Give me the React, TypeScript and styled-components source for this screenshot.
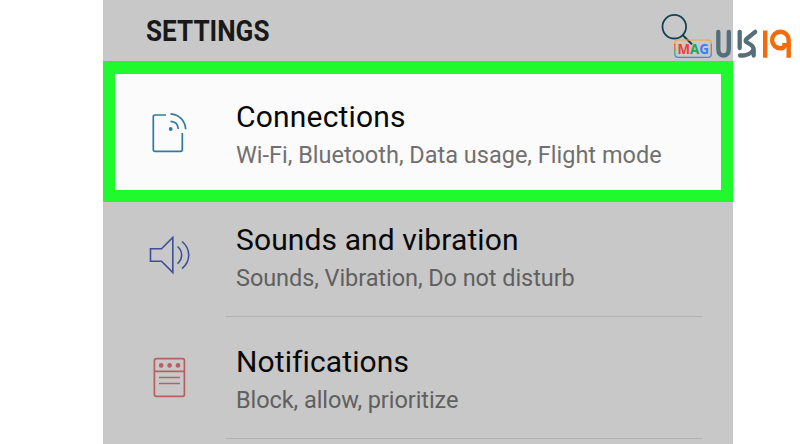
import React from "react";
import styled, { createGlobalStyle } from "styled-components";

const GlobalStyle = createGlobalStyle`
  * { box-sizing: border-box; }
  body { margin: 0; background: #fff; font-family: Roboto, sans-serif; }
`;

const Page = styled.main`
  position: relative;
  width: 800px;
  height: 444px;
  padding-left: 103px;
  overflow: hidden;
  background: #fff;
`;

const Screen = styled.section`
  width: 630px;
  height: 444px;
  background: #c8c8c8;
  display: flex;
  flex-direction: column;
  overflow: hidden;
`;

const Header = styled.header`
  height: 61px;
  flex: none;
  display: flex;
  align-items: center;
  padding-left: 43px;
`;

const Heading = styled.h1`
  margin: 0;
  font-size: 30px;
  line-height: 61px;
  font-weight: 700;
  color: #191919;
  transform: scaleX(0.87);
  transform-origin: left;
`;

const Row = styled.div<{ $highlight?: boolean }>`
  flex: none;
  height: ${(p) => (p.$highlight ? 141 : 122)}px;
  padding-left: ${(p) => (p.$highlight ? 33 : 45)}px;
  border: solid #20f92e;
  border-width: ${(p) => (p.$highlight ? "13px 12px 12px" : "0")};
  background: ${(p) => (p.$highlight ? "#fbfbfb" : "transparent")};
  display: flex;
`;

const IconBox = styled.div<{ $top: number }>`
  width: 78px;
  flex: none;
  padding-top: ${(p) => p.$top}px;
  svg { display: block; }
`;

const Content = styled.div<{ $divided?: boolean; $top: number }>`
  width: 476px;
  height: ${(p) => (p.$divided ? "115px" : "auto")};
  padding: ${(p) => p.$top}px 0 0 10px;
  border-bottom: ${(p) => (p.$divided ? "1px solid #b1b1b1" : "0")};
  white-space: nowrap;
`;

const Title = styled.div<{ $spacing: number }>`
  font-size: 30px;
  line-height: 36px;
  letter-spacing: ${(p) => p.$spacing}px;
  color: #080808;
`;

const Detail = styled.div<{ $spacing: number; $light?: boolean }>`
  font-size: 23.5px;
  line-height: 30px;
  margin-top: 5px;
  letter-spacing: ${(p) => p.$spacing}px;
  color: ${(p) => (p.$light ? "#707070" : "#606060")};
`;

const Brand = styled.svg`
  position: absolute;
  left: 655px;
  top: 8px;
`;

const ConnectionIcon = () => (
  <svg width="44" height="44" viewBox="148 110 44 44" fill="none" stroke="#307ba3" strokeWidth="1.7">
    <path d="M166 115H155Q153.300 115 153.300 117V149.500Q153.300 151.300 155 151.300H180.500Q182.300 151.300 182.300 149.500V133" />
    <path d="M170.500 113.800C179 114.300 185 120.500 185.700 129.300M170.500 121.300C175 121.500 178 124.500 178.300 129" />
    <circle cx="170.700" cy="129" r="1.900" fill="#307ba3" stroke="none" />
  </svg>
);

const SpeakerIcon = () => (
  <svg width="44" height="44" viewBox="148 234 44 44" fill="none" stroke="#3f4e99" strokeWidth="1.600">
    <path d="M150.500 248.800H161.500L172.800 237.500V272.500L161.500 261.200H150.500Z" />
    <path d="M177.500 246.500C183 251 183 259 177.500 263.700M182 241.500C191 249 191 261 182 268.700" />
  </svg>
);

const NotificationIcon = () => (
  <svg width="44" height="44" viewBox="148 356 44 44" fill="none" stroke="#b8605f" strokeWidth="1.700">
    <rect x="154.400" y="358.700" width="30" height="37.600" rx="1.800" />
    <path d="M154.400 371.400H184.400M159 377.500H180M159 383.500H180" />
    <g fill="#b8605f" stroke="none">
      <circle cx="161.200" cy="365.400" r="2.300" />
      <circle cx="169.600" cy="365.400" r="2.300" />
      <circle cx="178" cy="365.400" r="2.300" />
    </g>
  </svg>
);

const SearchAndBrand = () => (
  <Brand width="140" height="54" viewBox="655 8 140 54" fill="none">
    <circle cx="674.3" cy="26.700" r="12.800" stroke="#b4d3da" strokeWidth="1" />
    <circle cx="674.3" cy="26.700" r="11.800" stroke="#173f50" strokeWidth="1.800" />
    <path d="M682.800 35.200L692 44.300" stroke="#173f50" strokeWidth="2" />
    <g strokeWidth="1.200" strokeLinecap="round">
      <path d="M674.800 44V43.500Q674.800 40 678.300 40H708Q711.300 40 711.300 43.500" stroke="#f2a73b" />
      <path d="M674.800 44V50" stroke="#e4513e" />
      <path d="M674.800 50V54" stroke="#4ba965" />
      <path d="M674.800 54Q674.800 57.300 678.300 57.300H708Q711.300 57.300 711.300 54" stroke="#4389de" />
      <path d="M711.300 44V54" stroke="#de5b4c" />
    </g>
    <text x="677.500" y="54" fontFamily="Open Sans, sans-serif" fontWeight="700" fontSize="13.600" textLength="31.500" lengthAdjust="spacingAndGlyphs">
      <tspan fill="#ee4037">M</tspan><tspan fill="#27a34f">A</tspan><tspan fill="#3185f7">G</tspan>
    </text>
    <g stroke="#546e7a" strokeWidth="4.300" strokeLinecap="round" strokeLinejoin="round">
      <path d="M718.300 31.800V48.500Q718.300 55.500 723.500 55.500Q728.800 55.500 728.800 48.500V31.800" />
      <path d="M739.700 31.800V48" />
      <path d="M755.200 31.800L746.500 39Q744.500 41 747 42.500L750.500 44.500Q753.700 46.500 753.700 50V55.500" />
      <path d="M740 55.500H743Q749.500 55 753 50.500" />
    </g>
    <g stroke="#f36c0c" strokeWidth="4.400" strokeLinejoin="round">
      <path d="M765.200 30.500V57.700" />
      <path d="M788.700 57.700V40A8.300 8.300 0 1 0 780.400 48.300Q783.500 48.300 784.500 46V43" />
    </g>
  </Brand>
);

export default function App() {
  return (
    <Page>
      <GlobalStyle />
      <Screen>
        <Header><Heading>SETTINGS</Heading></Header>
        <Row $highlight>
          <IconBox $top={36}><ConnectionIcon /></IconBox>
          <Content $top={25}>
            <Title $spacing={0.19}>Connections</Title>
            <Detail $spacing={0} $light>Wi-Fi, Bluetooth, Data usage, Flight mode</Detail>
          </Content>
        </Row>
        <Row>
          <IconBox $top={32}><SpeakerIcon /></IconBox>
          <Content $top={20} $divided>
            <Title $spacing={0.11}>Sounds and vibration</Title>
            <Detail $spacing={-0.07}>Sounds, Vibration, Do not disturb</Detail>
          </Content>
        </Row>
        <Row>
          <IconBox $top={32}><NotificationIcon /></IconBox>
          <Content $top={20} $divided>
            <Title $spacing={0.11}>Notifications</Title>
            <Detail $spacing={-0.07}>Block, allow, prioritize</Detail>
          </Content>
        </Row>
      </Screen>
      <SearchAndBrand />
    </Page>
  );
}
